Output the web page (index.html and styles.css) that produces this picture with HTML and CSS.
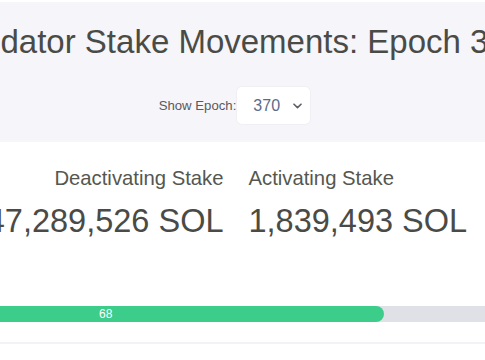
FILE: index.html
```html
<!DOCTYPE html>
<html lang="en">
<head>
    <meta charset="UTF-8">
    <meta name="viewport" content="width=device-width, initial-scale=1.0">
    <title>Validator Stake Movements</title>
    <link rel="stylesheet" href="styles.css">
</head>
<body>
    <div class="page">
        <header class="hero">
            <h1>Validator Stake Movements: Epoch 370</h1>
            <div class="epoch-picker">
                <label for="epoch">Show Epoch:</label>
                <span class="select-wrap">
                    <select id="epoch" class="epoch-select">
                        <option>370</option>
                        <option>369</option>
                        <option>368</option>
                    </select>
                    <svg class="chevron" width="9" height="6" viewBox="0 0 9 6">
                        <path d="M1 1.2 L4.5 4.6 L8 1.2" fill="none" stroke="#5a5f66" stroke-width="1.6" stroke-linecap="round" stroke-linejoin="round"/>
                    </svg>
                </span>
            </div>
        </header>

        <section class="stats">
            <div class="stat stat-left">
                <p class="stat-label">Deactivating Stake</p>
                <p class="stat-value">47,289,526 SOL</p>
            </div>
            <div class="stat stat-right">
                <p class="stat-label">Activating Stake</p>
                <p class="stat-value">1,839,493 SOL</p>
            </div>
        </section>

        <div class="progress">
            <div class="progress-fill" style="width: 68%">68</div>
        </div>

        <hr class="divider">
    </div>
</body>
</html>
```

FILE: styles.css
```css
/* Reset */
body, h1, p, hr {
    margin: 0;
    padding: 0;
}

body {
    background: #fff;
    font-family: 'Liberation Sans', Arial, sans-serif;
    color: #4a4b46;
    overflow: hidden;
}

.page {
    width: 820px;
    margin-left: -174px;
    margin-top: 2px;
}

/* Header */
.hero {
    background: #f5f5fa;
    padding: 20px 0 18px;
    display: flex;
    flex-direction: column;
    align-items: center;
}

.hero h1 {
    font-size: 33px;
    font-weight: normal;
    line-height: 39px;
    white-space: nowrap;
    margin-left: 1px;
    color: #4a4b46;
}

.epoch-picker {
    display: flex;
    align-items: center;
    margin-top: 26px;
    margin-right: 3px;
    font-size: 13.2px;
    color: #5a5a5a;
}

.select-wrap {
    position: relative;
    display: inline-block;
    margin-left: 1px;
}

.epoch-select {
    appearance: none;
    -webkit-appearance: none;
    width: 73px;
    height: 37px;
    padding: 0 0 0 16px;
    border: none;
    border-radius: 5px;
    background: #fff;
    font-family: 'Liberation Sans', Arial, sans-serif;
    font-size: 16px;
    color: #5b6b8c;
    box-shadow: 0 0 0 1px #f0f0f4;
}

.chevron {
    position: absolute;
    right: 8px;
    top: 16px;
    pointer-events: none;
}

/* Stats */
.stats {
    display: grid;
    grid-template-columns: 1fr 1fr;
    column-gap: 25px;
    padding-top: 24px;
}

.stat-left {
    text-align: right;
}

.stat-right {
    text-align: left;
}

.stat-label {
    font-size: 20.3px;
    line-height: 24px;
    color: #55574f;
}

.stat-value {
    font-size: 32.5px;
    line-height: 39px;
    margin-top: 12px;
    white-space: nowrap;
}

/* Progress */
.progress {
    margin-top: 65px;
    height: 16px;
    background: #e0e1e6;
    display: flex;
}

.progress-fill {
    box-sizing: border-box;
    background: #3ccd8a;
    border-radius: 8px;
    color: #fff;
    font-size: 12px;
    line-height: 16px;
    text-align: center;
    padding-left: 2px;
}

.divider {
    border: none;
    height: 2px;
    background: #f2f2f7;
    margin-top: 20px;
}
```
